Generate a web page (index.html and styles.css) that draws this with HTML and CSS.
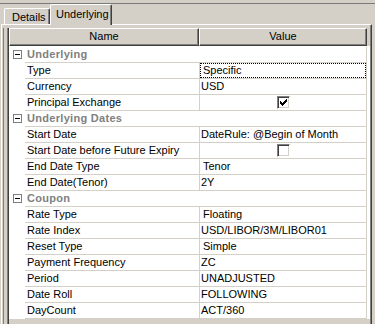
FILE: index.html
```html
<!DOCTYPE html>
<html>
<head>
<meta charset="utf-8">
<link rel="stylesheet" href="styles.css">
</head>
<body>
<div class="window">
  <div class="tabs">
    <div class="tab tab-details">Details</div>
    <div class="tab tab-active">Underlying</div>
  </div>
  <div class="page">
    <div class="grid-outer">
      <div class="grid">
        <div class="gv">
          <div class="header">
            <div class="hcell hname">Name</div>
            <div class="hcell hval">Value</div>
          </div>
          <div class="rows">
            <div class="row"><div class="gut"><span class="minus"></span></div><div class="cat">Underlying</div></div>
            <div class="row"><div class="gut"></div><div class="name">Type</div><div class="val"><span class="focus">Specific</span></div></div>
            <div class="row"><div class="gut"></div><div class="name">Currency</div><div class="val">USD</div></div>
            <div class="row"><div class="gut"></div><div class="name">Principal Exchange</div><div class="val val-cb"><span class="cb"><svg width="7" height="7" viewBox="0 0 7 7" shape-rendering="crispEdges"><rect x="6" y="0" width="1" height="1"/><rect x="5" y="1" width="2" height="1"/><rect x="0" y="2" width="1" height="1"/><rect x="4" y="2" width="3" height="1"/><rect x="0" y="3" width="2" height="1"/><rect x="3" y="3" width="3" height="1"/><rect x="0" y="4" width="5" height="1"/><rect x="1" y="5" width="3" height="1"/><rect x="2" y="6" width="1" height="1"/></svg></span></div></div>
            <div class="row"><div class="gut"><span class="minus"></span></div><div class="cat">Underlying Dates</div></div>
            <div class="row"><div class="gut"></div><div class="name">Start Date</div><div class="val">DateRule: @Begin of Month</div></div>
            <div class="row"><div class="gut"></div><div class="name">Start Date before Future Expiry</div><div class="val val-cb"><span class="cb"></span></div></div>
            <div class="row"><div class="gut"></div><div class="name">End Date Type</div><div class="val combo">Tenor</div></div>
            <div class="row"><div class="gut"></div><div class="name">End Date(Tenor)</div><div class="val">2Y</div></div>
            <div class="row"><div class="gut"><span class="minus"></span></div><div class="cat">Coupon</div></div>
            <div class="row"><div class="gut"></div><div class="name">Rate Type</div><div class="val combo">Floating</div></div>
            <div class="row"><div class="gut"></div><div class="name">Rate Index</div><div class="val">USD/LIBOR/3M/LIBOR01</div></div>
            <div class="row"><div class="gut"></div><div class="name">Reset Type</div><div class="val combo">Simple</div></div>
            <div class="row"><div class="gut"></div><div class="name">Payment Frequency</div><div class="val">ZC</div></div>
            <div class="row"><div class="gut"></div><div class="name">Period</div><div class="val">UNADJUSTED</div></div>
            <div class="row"><div class="gut"></div><div class="name">Date Roll</div><div class="val">FOLLOWING</div></div>
            <div class="row"><div class="gut"></div><div class="name">DayCount</div><div class="val">ACT/360</div></div>
          </div>
        </div>
      </div>
    </div>
  </div>
</div>
</body>
</html>
```

FILE: styles.css
```css
html, body {
  margin: 0;
  padding: 0;
  height: 324px;
  overflow: hidden;
  background: #d4d0c8;
}
body {
  font-family: "Liberation Sans", Arial, sans-serif;
  font-size: 11px;
  color: #000;
}
.window {
  margin-top: 3px;
  border-top: 1px solid #7a7a7a;
  height: 320px;
  display: flex;
  flex-direction: column;
}
.tabs {
  display: flex;
  align-items: flex-end;
  height: 20px;
  padding-left: 4px;
  flex: none;
}
.tab {
  box-sizing: border-box;
  background: #d4d0c8;
  border-top: 1px solid #fff;
  border-left: 1px solid #fff;
  border-right: 1px solid #404040;
  box-shadow: inset -1px 0 #808080;
  border-radius: 2px 2px 0 0;
  line-height: 14px;
  white-space: nowrap;
}
.tab-details {
  width: 46px;
  height: 16px;
  padding: 1px 0 0 7px;
}
.tab-active {
  width: 62px;
  height: 21px;
  margin-bottom: -1px;
  padding: 2px 0 0 5px;
  position: relative;
  z-index: 1;
}
.page {
  flex: 1;
  margin: 0 3px 0 1px;
  border-top: 1px solid #fff;
  border-left: 1px solid #fff;
  border-right: 1px solid #404040;
  box-shadow: inset -1px 0 #808080;
  padding: 3px 1px 0 1px;
  display: flex;
  min-height: 0;
}
.grid-outer {
  flex: 1;
  border-left: 1px solid #808080;
  padding-left: 3px;
  display: flex;
}
.grid {
  flex: 1;
  border-left: 1px solid #808080;
  display: flex;
}
.gv {
  flex: 1;
  border-left: 1px solid #404040;
  background: #d4d0c8;
}
.header {
  display: flex;
  height: 18px;
}
.hcell {
  box-sizing: border-box;
  height: 18px;
  border-top: 1px solid #fff;
  border-left: 1px solid #fff;
  border-right: 1px solid #404040;
  border-bottom: 1px solid #404040;
  box-shadow: inset -1px -1px #808080;
  text-align: center;
  line-height: 15px;
}
.hname { width: 190px; }
.hval { width: 168px; }
.rows {
  background: #fff;
  padding-top: 1px;
}
.row {
  display: flex;
  height: 16px;
}
.gut {
  width: 16px;
  flex: none;
  box-sizing: border-box;
  padding-left: 4px;
  display: flex;
  align-items: center;
  padding-bottom: 1px;
}
.minus {
  box-sizing: border-box;
  width: 9px;
  height: 9px;
  border: 1px solid #808080;
  background: #fff;
  display: flex;
  align-items: center;
  justify-content: center;
}
.minus::before {
  content: "";
  width: 5px;
  height: 1px;
  background: #000;
}
.name, .val, .cat {
  box-sizing: border-box;
  height: 16px;
  border-bottom: 1px solid #d4d0c8;
  line-height: 15px;
  white-space: nowrap;
  overflow: hidden;
}
.name {
  width: 174px;
  padding-left: 2px;
}
.val {
  width: 168px;
  border-left: 1px solid #d4d0c8;
  border-right: 1px solid #d4d0c8;
  padding-left: 1px;
}
.val.combo { padding-left: 3px; }
.cat {
  width: 342px;
  border-right: 1px solid #d4d0c8;
  padding-left: 2px;
  font-weight: bold;
  color: #808080;
  letter-spacing: 0.3px;
}
.focus {
  display: block;
  box-sizing: border-box;
  height: 15px;
  margin-left: -1px;
  border: 1px dotted #000;
  padding-left: 2px;
  line-height: 13px;
}
.val-cb {
  display: flex;
  justify-content: center;
  align-items: center;
  padding-left: 0;
}
.cb {
  box-sizing: border-box;
  width: 13px;
  height: 13px;
  border: 1px solid;
  border-color: #808080 #fff #fff #808080;
  box-shadow: inset 1px 1px #404040, inset -1px -1px #d4d0c8;
  background: #fff;
  display: flex;
  align-items: center;
  justify-content: center;
}
.cb svg { display: block; fill: #000; }
```
